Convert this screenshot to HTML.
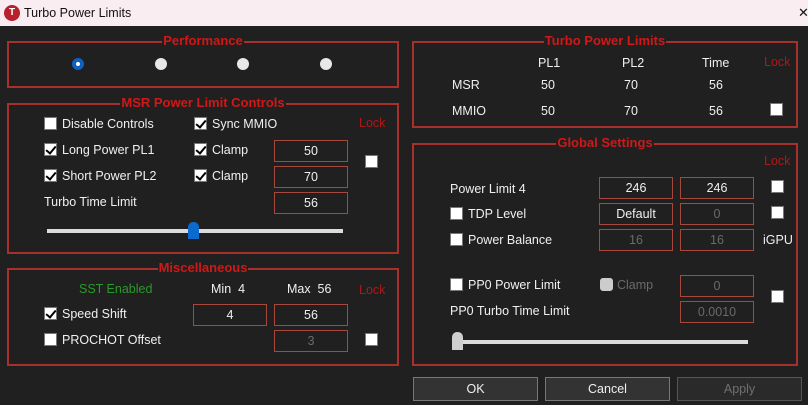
<!DOCTYPE html>
<html><head><meta charset="utf-8"><style>
*{margin:0;padding:0;box-sizing:border-box}
body{width:808px;height:405px;background:#202020;font-family:"Liberation Sans",sans-serif;font-size:12.5px;color:#f0f0f0;position:relative;overflow:hidden}
.a{position:absolute;white-space:nowrap;margin-top:1px}
#tb{position:absolute;left:0;top:0;width:808px;height:26px;background:#f9edf1;color:#111;font-size:12.5px}
.grp{position:absolute;border:2px solid #a8302c}
.gt{position:absolute;top:-9px;left:0;right:0;text-align:center;line-height:14px}
.gt span{background:#202020;color:#d01818;font-weight:bold;font-size:13px;padding:0 1px}
.cb{position:absolute;width:13px;height:13px;background:#fff;border:1px solid #777}
.cb.k::after{content:"";position:absolute;left:3px;top:0px;width:4px;height:8px;border:solid #000;border-width:0 2px 2px 0;transform:rotate(40deg)}
.in{position:absolute;width:74px;height:22px;border:1px solid #a8483c;text-align:center;line-height:21px;color:#f0f0f0}
.in.d{color:#6a6a6a}
.red{color:#b01818}
.rad{position:absolute;width:12px;height:12px;border-radius:50%;background:#e8e8e8}
.btn{position:absolute;top:377px;width:125px;height:24px;border:1px solid #777;background:#333;text-align:center;line-height:22px;color:#f0f0f0}
</style></head><body>
<div id="tb">
<div class="a" style="left:4px;top:4px;width:16px;height:16px;border-radius:50%;background:#b8202c;color:#fff;font-size:10px;font-weight:bold;text-align:center;line-height:16px">T</div>
<div class="a" style="left:24px;top:5px">Turbo Power Limits</div>
<div class="a" style="left:798px;top:4px;font-size:13px">✕</div>
</div>

<div class="grp" style="left:7px;top:41px;width:392px;height:47px"><div class="gt"><span>Performance</span></div></div>
<div class="rad" style="left:72px;top:58px;background:#1060c0"></div><div class="rad" style="left:76px;top:62px;width:4px;height:4px;background:#fff"></div>
<div class="rad" style="left:155px;top:58px"></div>
<div class="rad" style="left:237px;top:58px"></div>
<div class="rad" style="left:320px;top:58px"></div>

<div class="grp" style="left:7px;top:103px;width:392px;height:151px"><div class="gt"><span>MSR Power Limit Controls</span></div></div>
<div class="cb" style="left:44px;top:117px"></div><div class="a" style="left:62px;top:116px">Disable Controls</div>
<div class="cb k" style="left:194px;top:117px"></div><div class="a" style="left:212px;top:116px">Sync MMIO</div>
<div class="a red" style="left:359px;top:115px">Lock</div>
<div class="cb k" style="left:44px;top:143px"></div><div class="a" style="left:62px;top:142px">Long Power PL1</div>
<div class="cb k" style="left:194px;top:143px"></div><div class="a" style="left:212px;top:142px">Clamp</div>
<div class="in" style="left:274px;top:140px">50</div>
<div class="cb" style="left:365px;top:155px"></div>
<div class="cb k" style="left:44px;top:169px"></div><div class="a" style="left:62px;top:168px">Short Power PL2</div>
<div class="cb k" style="left:194px;top:169px"></div><div class="a" style="left:212px;top:168px">Clamp</div>
<div class="in" style="left:274px;top:166px">70</div>
<div class="a" style="left:44px;top:194px">Turbo Time Limit</div>
<div class="in" style="left:274px;top:192px">56</div>
<div class="a" style="left:47px;top:228px;width:296px;height:4px;background:#dcdcdc"></div>
<div class="a" style="left:188px;top:221px;width:11px;height:17px;background:#0a6ad0;border-radius:5px 5px 0 0"></div>

<div class="grp" style="left:7px;top:268px;width:392px;height:98px"><div class="gt"><span>Miscellaneous</span></div></div>
<div class="a" style="left:79px;top:281px;color:#2a9a2a">SST Enabled</div>
<div class="a" style="left:211px;top:281px">Min&nbsp; 4</div>
<div class="a" style="left:287px;top:281px">Max&nbsp; 56</div>
<div class="a red" style="left:359px;top:282px">Lock</div>
<div class="cb k" style="left:44px;top:307px"></div><div class="a" style="left:62px;top:306px">Speed Shift</div>
<div class="in" style="left:193px;top:304px">4</div>
<div class="in" style="left:274px;top:304px">56</div>
<div class="cb" style="left:44px;top:333px"></div><div class="a" style="left:62px;top:332px">PROCHOT Offset</div>
<div class="in d" style="left:274px;top:330px">3</div>
<div class="cb" style="left:365px;top:333px"></div>

<div class="grp" style="left:412px;top:41px;width:386px;height:87px"><div class="gt"><span>Turbo Power Limits</span></div></div>
<div class="a" style="left:538px;top:55px">PL1</div>
<div class="a" style="left:622px;top:55px">PL2</div>
<div class="a" style="left:702px;top:55px">Time</div>
<div class="a red" style="left:764px;top:54px">Lock</div>
<div class="a" style="left:452px;top:77px">MSR</div>
<div class="a" style="left:541px;top:77px">50</div>
<div class="a" style="left:624px;top:77px">70</div>
<div class="a" style="left:709px;top:77px">56</div>
<div class="a" style="left:452px;top:103px">MMIO</div>
<div class="a" style="left:541px;top:103px">50</div>
<div class="a" style="left:624px;top:103px">70</div>
<div class="a" style="left:709px;top:103px">56</div>
<div class="cb" style="left:770px;top:103px"></div>

<div class="grp" style="left:412px;top:143px;width:386px;height:223px"><div class="gt"><span>Global Settings</span></div></div>
<div class="a red" style="left:764px;top:153px">Lock</div>
<div class="a" style="left:450px;top:181px">Power Limit 4</div>
<div class="in" style="left:599px;top:177px">246</div>
<div class="in" style="left:680px;top:177px">246</div>
<div class="cb" style="left:771px;top:180px"></div>
<div class="cb" style="left:450px;top:207px"></div><div class="a" style="left:468px;top:206px">TDP Level</div>
<div class="in" style="left:599px;top:203px">Default</div>
<div class="in d" style="left:680px;top:203px">0</div>
<div class="cb" style="left:771px;top:206px"></div>
<div class="cb" style="left:450px;top:233px"></div><div class="a" style="left:468px;top:232px">Power Balance</div>
<div class="in d" style="left:599px;top:229px">16</div>
<div class="in d" style="left:680px;top:229px">16</div>
<div class="a" style="left:763px;top:232px">iGPU</div>
<div class="cb" style="left:450px;top:278px"></div><div class="a" style="left:468px;top:277px">PP0 Power Limit</div>
<div class="cb" style="left:600px;top:278px;background:#ccc;border-color:#ccc;border-radius:3px"></div><div class="a" style="left:617px;top:277px;color:#6a6a6a">Clamp</div>
<div class="in d" style="left:680px;top:275px">0</div>
<div class="cb" style="left:771px;top:290px"></div>
<div class="a" style="left:450px;top:303px">PP0 Turbo Time Limit</div>
<div class="in d" style="left:680px;top:301px">0.0010</div>
<div class="a" style="left:452px;top:339px;width:296px;height:4px;background:#dcdcdc"></div>
<div class="a" style="left:452px;top:331px;width:11px;height:18px;background:#cfcfcf;border-radius:5px 5px 0 0"></div>

<div class="btn" style="left:413px">OK</div>
<div class="btn" style="left:545px">Cancel</div>
<div class="btn" style="left:677px;color:#707070;border-color:#555;background:#2a2a2a">Apply</div>
</body></html>
